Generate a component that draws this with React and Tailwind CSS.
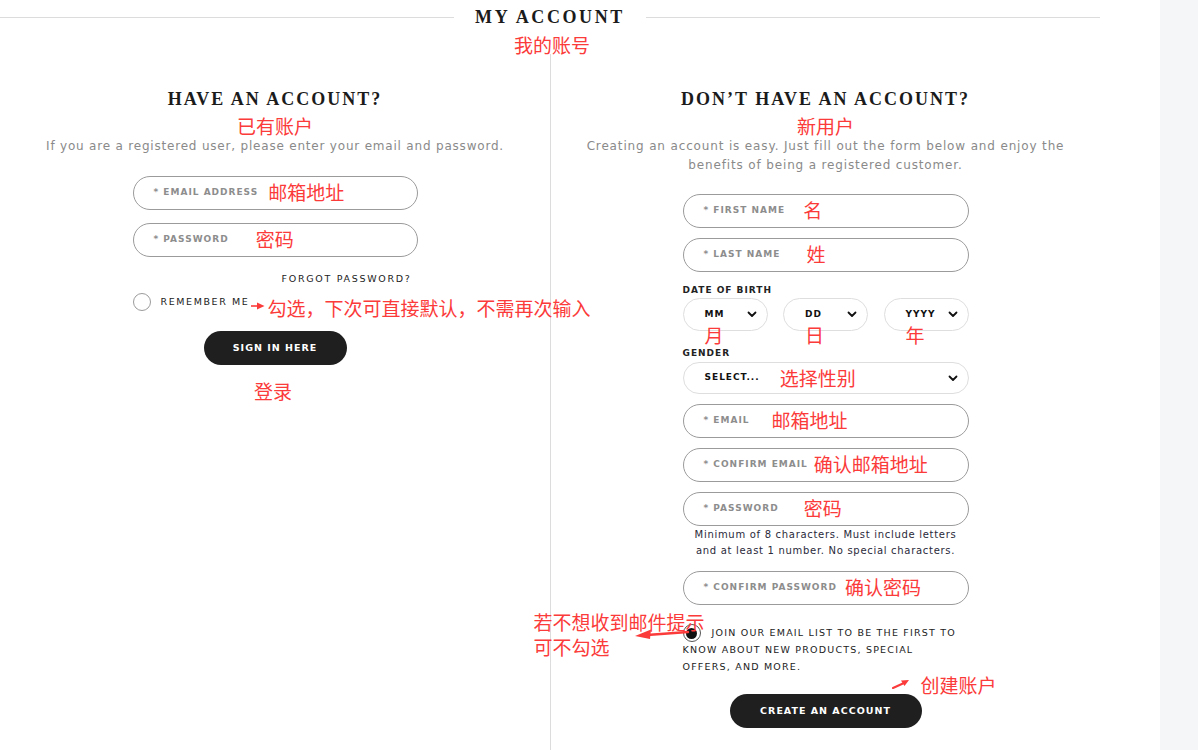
import React from "react";

// shared text styles
const cjk = "font-['Noto_Sans_CJK_SC',sans-serif] text-[19px] leading-none text-[#fb3a3a] whitespace-nowrap";
const serifHead = "font-['Liberation_Serif',serif] font-bold uppercase text-[#1b1b1b]";

const Chevron = () => (
  <svg width="10" height="7" viewBox="0 0 10 7">
    <path d="M1.5 1.5L5 5l3.5-3.5" fill="none" stroke="#111" strokeWidth="1.8" strokeLinecap="round" strokeLinejoin="round" />
  </svg>
);

const Field = ({ label, note, noteClass = "", className = "" }) => (
  <div className={`flex h-[34px] items-center rounded-full border border-[#9b9b9b] pl-5 ${className}`}>
    <span className="whitespace-nowrap text-[9px] font-bold tracking-[1px] text-[#8d8d8d]">* {label}</span>
    {note && <span className={`relative -top-[2px] ${cjk} ${noteClass}`}>{note}</span>}
  </div>
);

const DateSelect = ({ label, note }) => (
  <div className="relative flex h-[33px] w-[85px] items-center justify-between rounded-full border border-[#dedede] pl-[21px] pr-[10px]">
    <span className="text-[9px] font-bold tracking-[1px] text-[#111]">{label}</span>
    <Chevron />
    <span className={`absolute left-[21px] top-[26px] ${cjk}`}>{note}</span>
  </div>
);

const Button = ({ children, className = "" }) => (
  <button className={`flex h-[34px] items-center justify-center rounded-full bg-[#1f1f1f] text-[9.5px] font-bold tracking-[1px] text-white ${className}`}>
    {children}
  </button>
);

export default function App() {
  return (
    <div className="flex h-[750px] w-[1198px] overflow-hidden bg-white font-['DejaVu_Sans',sans-serif]">
      <div className="flex w-[1160px] flex-col">
        <div className="flex w-[1100px] flex-1 flex-col">
          <div className="flex h-[34px] items-center gap-[21px]">
            <div className="h-px flex-1 bg-[#dcdcdc]" />
            <h1 className={`${serifHead} text-[18px] tracking-[2.6px]`}>My Account</h1>
            <div className="h-px flex-1 bg-[#dcdcdc]" />
          </div>
          <div className="flex h-[20px] items-center justify-center pl-[4px]">
            <span className={cjk}>我的账号</span>
          </div>

          <div className="flex flex-1">
            {/* sign in */}
            <div className="flex w-[550px] flex-col items-center pt-[34px]">
              <h2 className={`${serifHead} text-[18px] leading-[22px] tracking-[2px]`}>Have an account?</h2>
              <span className={`mt-[6px] ${cjk}`}>已有账户</span>
              <p className="mt-[3px] text-[12px] leading-[16px] tracking-[0.8px] text-[#8a8a8a]">
                If you are a registered user, please enter your email and password.
              </p>
              <div className="mt-[22px] flex w-[285px] flex-col">
                <Field label="EMAIL ADDRESS" note="邮箱地址" noteClass="ml-[10px]" />
                <Field label="PASSWORD" note="密码" noteClass="ml-[27px]" className="mt-[13px]" />
                <div className="mt-[15px] pr-[6px] text-right text-[9.5px] tracking-[1.7px] text-[#222]">FORGOT PASSWORD?</div>
                <div className="mt-[6px] flex items-center">
                  <span className="h-[18px] w-[18px] shrink-0 rounded-full border border-[#9b9b9b]" />
                  <span className="ml-[10px] whitespace-nowrap text-[9.5px] tracking-[1.6px] text-[#222]">REMEMBER ME</span>
                  <svg width="14" height="8" viewBox="0 0 14 8" className="relative top-[4px] ml-[2px] shrink-0">
                    <path d="M0 4h8" stroke="#fb3a3a" strokeWidth="1.6" />
                    <path d="M6 0.5L13.5 4 6 7.5z" fill="#fb3a3a" />
                  </svg>
                  <span className={`relative top-[6px] ml-[2px] ${cjk}`}>勾选，下次可直接默认，不需再次输入</span>
                </div>
                <Button className="mt-[20px] w-[143px] self-center">SIGN IN HERE</Button>
                <span className={`mt-[16px] self-center pr-[4px] ${cjk}`}>登录</span>
              </div>
            </div>

            {/* register */}
            <div className="flex w-[550px] flex-col items-center border-l border-[#dcdcdc] pt-[34px]">
              <h2 className={`${serifHead} text-[18px] leading-[22px] tracking-[2px]`}>Don’t have an account?</h2>
              <span className={`mt-[6px] ${cjk}`}>新用户</span>
              <p className="mt-[2px] text-center text-[12px] leading-[19px] tracking-[0.85px] text-[#8a8a8a]">
                Creating an account is easy. Just fill out the form below and enjoy the
                <br />
                benefits of being a registered customer.
              </p>
              <div className="mt-[19px] flex w-[286px] flex-col">
                <Field label="FIRST NAME" note="名" noteClass="ml-[18px]" />
                <Field label="LAST NAME" note="姓" noteClass="ml-[26px]" className="mt-[10px]" />
                <div className="mt-[12px] text-[9px] font-bold leading-[12px] tracking-[1px] text-[#222]">DATE OF BIRTH</div>
                <div className="mt-[2px] flex justify-between">
                  <DateSelect label="MM" note="月" />
                  <DateSelect label="DD" note="日" />
                  <DateSelect label="YYYY" note="年" />
                </div>
                <div className="mt-[16px] text-[9px] font-bold leading-[12px] tracking-[1px] text-[#222]">GENDER</div>
                <div className="mt-[3px] flex h-[32px] items-center justify-between rounded-full border border-[#dedede] pl-[21px] pr-[10px]">
                  <div className="flex items-center">
                    <span className="text-[9px] font-bold tracking-[1px] text-[#111]">SELECT...</span>
                    <span className={`relative -top-[1px] ml-[20px] ${cjk}`}>选择性别</span>
                  </div>
                  <Chevron />
                </div>
                <Field label="EMAIL" note="邮箱地址" noteClass="ml-[22px]" className="mt-[10px]" />
                <Field label="CONFIRM EMAIL" note="确认邮箱地址" noteClass="ml-[6px]" className="mt-[10px]" />
                <Field label="PASSWORD" note="密码" noteClass="ml-[25px]" className="mt-[10px]" />
                <p className="mt-[1px] text-center text-[10px] leading-[16px] tracking-[0.7px] text-[#2a2a3a]">
                  Minimum of 8 characters. Must include letters
                  <br />
                  and at least 1 number. No special characters.
                </p>
                <Field label="CONFIRM PASSWORD" note="确认密码" noteClass="ml-[8px]" className="mt-[12px]" />

                <div className="relative mt-[19px]">
                  <p className="whitespace-nowrap text-[9.5px] leading-[16.5px] tracking-[1.2px] text-[#222]">
                    <span className="mr-[11px] inline-flex h-[18px] w-[18px] items-center justify-center rounded-full border border-[#555] align-middle">
                      <span className="h-[11px] w-[11px] rounded-full bg-[#111]" />
                    </span>
                    JOIN OUR EMAIL LIST TO BE THE FIRST TO
                    <br />
                    KNOW ABOUT NEW PRODUCTS, SPECIAL
                    <br />
                    OFFERS, AND MORE.
                  </p>
                  <div className={`absolute left-[-149px] top-[-12px] flex flex-col gap-[6px] ${cjk}`}>
                    <span>若不想收到邮件提示</span>
                    <span>可不勾选</span>
                  </div>
                  <svg width="56" height="12" viewBox="0 0 56 12" className="absolute left-[-48px] top-[4px]">
                    <path d="M53 4L12 7" stroke="#fb3a3a" strokeWidth="2.4" strokeLinecap="round" />
                    <path d="M0 8L16 1.5 15 11z" fill="#fb3a3a" />
                  </svg>
                </div>

                <div className="relative mt-[19px] self-center">
                  <Button className="w-[192px]">CREATE AN ACCOUNT</Button>
                  <svg width="18" height="10" viewBox="0 0 18 10" className="absolute left-[162px] top-[-15px]">
                    <path d="M1 9L12 4" stroke="#fb3a3a" strokeWidth="2" strokeLinecap="round" />
                    <path d="M17 1L9 1.5 12.5 7z" fill="#fb3a3a" />
                  </svg>
                  <span className={`absolute left-[191px] top-[-19px] ${cjk}`}>创建账户</span>
                </div>
              </div>
            </div>
          </div>
        </div>
      </div>
      <div className="w-[38px] bg-[#f5f6f8]" />
    </div>
  );
}
